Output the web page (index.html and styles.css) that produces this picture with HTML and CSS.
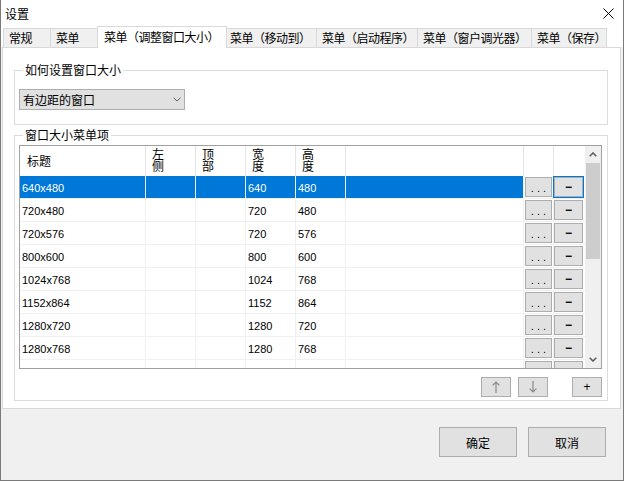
FILE: index.html
```html
<!DOCTYPE html>
<html lang="zh">
<head>
<meta charset="utf-8">
<title>设置</title>
<link rel="stylesheet" href="styles.css">
</head>
<body>
<div class="window">
  <div class="titlebar">
    <span class="title">设置</span>
    <svg class="close" width="11" height="11" viewBox="0 0 11 11"><path d="M0.5 0.5 L10.5 10.5 M10.5 0.5 L0.5 10.5" stroke="#000" stroke-width="1" fill="none"/></svg>
  </div>
  <div class="tabs">
    <div class="tab t1">常规</div>
    <div class="tab t2">菜单</div>
    <div class="tab active">菜单（调整窗口大小）</div>
    <div class="tab t4">菜单（移动到）</div>
    <div class="tab t5">菜单（启动程序）</div>
    <div class="tab t6">菜单（窗户调光器）</div>
    <div class="tab t7">菜单（保存）</div>
  </div>
  <div class="panel">
    <div class="group g1">
      <div class="legend">如何设置窗口大小</div>
      <div class="combo">
        <span>有边距的窗口</span>
        <svg width="8" height="5" viewBox="0 0 8 5"><polyline points="0.5,0.8 4,4 7.5,0.8" stroke="#606060" stroke-width="1" fill="none"/></svg>
      </div>
    </div>
    <div class="group g2">
      <div class="legend">窗口大小菜单项</div>
      <div class="list">
        <div class="rows">
          <div class="hdr">
            <div class="hc hc1">标题</div>
            <div class="hc"><span class="vt">左侧</span></div>
            <div class="hc"><span class="vt">顶部</span></div>
            <div class="hc"><span class="vt">宽度</span></div>
            <div class="hc"><span class="vt">高度</span></div>
            <div class="hc"></div>
            <div class="hc"></div>
            <div class="hc last"></div>
          </div>
          <div class="r sel">
            <div class="c t">640x480</div><div class="c t"></div><div class="c t"></div><div class="c t">640</div><div class="c t">480</div><div class="c t"></div>
            <div class="c cb"><button class="dots">. . .</button></div>
            <div class="c cb last"><button class="minus focus">−</button></div>
          </div>
          <div class="r">
            <div class="c">720x480</div><div class="c"></div><div class="c"></div><div class="c">720</div><div class="c">480</div><div class="c"></div>
            <div class="c cb"><button class="dots">. . .</button></div>
            <div class="c cb last"><button class="minus">−</button></div>
          </div>
          <div class="r">
            <div class="c">720x576</div><div class="c"></div><div class="c"></div><div class="c">720</div><div class="c">576</div><div class="c"></div>
            <div class="c cb"><button class="dots">. . .</button></div>
            <div class="c cb last"><button class="minus">−</button></div>
          </div>
          <div class="r">
            <div class="c">800x600</div><div class="c"></div><div class="c"></div><div class="c">800</div><div class="c">600</div><div class="c"></div>
            <div class="c cb"><button class="dots">. . .</button></div>
            <div class="c cb last"><button class="minus">−</button></div>
          </div>
          <div class="r">
            <div class="c">1024x768</div><div class="c"></div><div class="c"></div><div class="c">1024</div><div class="c">768</div><div class="c"></div>
            <div class="c cb"><button class="dots">. . .</button></div>
            <div class="c cb last"><button class="minus">−</button></div>
          </div>
          <div class="r">
            <div class="c">1152x864</div><div class="c"></div><div class="c"></div><div class="c">1152</div><div class="c">864</div><div class="c"></div>
            <div class="c cb"><button class="dots">. . .</button></div>
            <div class="c cb last"><button class="minus">−</button></div>
          </div>
          <div class="r">
            <div class="c">1280x720</div><div class="c"></div><div class="c"></div><div class="c">1280</div><div class="c">720</div><div class="c"></div>
            <div class="c cb"><button class="dots">. . .</button></div>
            <div class="c cb last"><button class="minus">−</button></div>
          </div>
          <div class="r">
            <div class="c">1280x768</div><div class="c"></div><div class="c"></div><div class="c">1280</div><div class="c">768</div><div class="c"></div>
            <div class="c cb"><button class="dots">. . .</button></div>
            <div class="c cb last"><button class="minus">−</button></div>
          </div>
          <div class="r">
            <div class="c"></div><div class="c"></div><div class="c"></div><div class="c"></div><div class="c"></div><div class="c"></div>
            <div class="c cb"><button class="dots"></button></div>
            <div class="c cb last"><button class="minus"></button></div>
          </div>
        </div>
        <div class="sb">
          <div class="sb-btn">
            <svg width="8" height="5" viewBox="0 0 8 5"><polyline points="0.7,4.3 4,1 7.3,4.3" stroke="#606060" stroke-width="1.6" fill="none"/></svg>
          </div>
          <div class="thumb"></div>
          <div class="sb-space"></div>
          <div class="sb-btn">
            <svg width="8" height="5" viewBox="0 0 8 5"><polyline points="0.7,0.7 4,4 7.3,0.7" stroke="#606060" stroke-width="1.6" fill="none"/></svg>
          </div>
        </div>
      </div>
      <div class="tools">
        <button class="tbtn">
          <svg width="8" height="12" viewBox="0 0 8 12"><path d="M4 1 V12 M0.6 4.4 L4 1 L7.4 4.4" stroke="#8a8a8a" stroke-width="1.2" fill="none"/></svg>
        </button>
        <button class="tbtn">
          <svg width="8" height="12" viewBox="0 0 8 12"><path d="M4 0 V11 M0.6 7.6 L4 11 L7.4 7.6" stroke="#8a8a8a" stroke-width="1.2" fill="none"/></svg>
        </button>
        <button class="tbtn plus">+</button>
      </div>
    </div>
  </div>
  <div class="footer">
    <button class="btn">确定</button>
    <button class="btn">取消</button>
  </div>
</div>
</body>
</html>
```

FILE: styles.css
```css
* { box-sizing: border-box; }

body {
  margin: 0;
  font-family: "Noto Sans CJK SC", "Liberation Sans", sans-serif;
  font-size: 12px;
  color: #000;
  background: #f0f0f0;
}

.window {
  width: 624px;
  height: 481px;
  border: 1px solid #7a7a7a;
  border-top: none;
  background: #f0f0f0;
  display: flex;
  flex-direction: column;
}

.titlebar {
  height: 26px;
  flex: none;
  background: #fff;
  display: flex;
  align-items: center;
  justify-content: space-between;
  padding: 1px 9px 0 4px;
}

.title { line-height: 16px; }

.close { display: block; }

.tabs {
  height: 21px;
  flex: none;
  background: #fff;
  display: flex;
  align-items: flex-end;
  padding-left: 2px;
}

.tab {
  flex: none;
  height: 19px;
  line-height: 17px;
  border: 1px solid #d9d9d9;
  border-bottom: none;
  background: #f0f0f0;
  padding-left: 5px;
  margin-left: -1px;
  white-space: nowrap;
  overflow: hidden;
  letter-spacing: -0.5px;
}

.t1 { width: 48px; margin-left: 0; }
.t2 { width: 50px; }
.t4 { width: 93px; }
.t5 { width: 102px; }
.t6 { width: 115px; }
.t7 { width: 76px; }

.tab.active {
  width: 130px;
  height: 22px;
  line-height: 19px;
  background: #fff;
  margin: 0 -2px -1px -3px;
  padding-left: 6px;
  position: relative;
  z-index: 1;
}

.panel {
  flex: none;
  height: 362px;
  margin: 0 2px 0 1px;
  border: 1px solid #d9d9d9;
  background: #fff;
  padding: 22px 12px 0 11px;
}

.group {
  border: 1px solid #dcdcdc;
}

.legend {
  width: max-content;
  margin: -8px 0 0 4px;
  padding: 0 2px;
  background: #fff;
  line-height: 14px;
}

.g1 { padding: 0 0 14px 4px; }

.combo {
  width: 166px;
  height: 21px;
  margin-top: 12px;
  background: #e1e1e1;
  border: 1px solid #adadad;
  display: flex;
  align-items: center;
  justify-content: space-between;
  padding: 0 3px 0 3px;
  line-height: 16px;
}

.combo svg { display: block; }

.g2 {
  margin-top: 10px;
  padding: 0 5px 3px 4px;
}

.list {
  margin-top: 3px;
  height: 224px;
  border: 1px solid #a0a0a0;
  display: flex;
}

.rows {
  width: 565px;
  flex: none;
  overflow: hidden;
}

.hdr, .r {
  display: grid;
  grid-template-columns: 126px 50px 50px 50px 50px 178px 30px 31px;
}

.hdr { height: 30px; }

.hc {
  border-right: 1px solid #e5e5e5;
  padding: 2px 0 0 6px;
  line-height: 12px;
}

.hc1 {
  padding: 0 0 0 7px;
  line-height: 30px;
}

.vt {
  display: block;
  width: 13px;
}

.last { border-right: none; }

.r {
  height: 23px;
  border-bottom: 1px solid #f0f0f0;
}

.c {
  border-right: 1px solid #f0f0f0;
  font-family: "Liberation Sans", sans-serif;
  font-size: 11px;
  line-height: 22px;
  padding: 1px 0 0 2px;
  white-space: nowrap;
  overflow: hidden;
}

.c.last { border-right: none; }

.r.sel .c.t {
  background: #0078d7;
  color: #fff;
}

.c.cb {
  padding: 0;
  display: flex;
  align-items: center;
  overflow: visible;
}

.dots, .minus, .tbtn {
  background: #e1e1e1;
  border: 1px solid #adadad;
  padding: 0;
  margin: 0;
  font-family: "Liberation Sans", sans-serif;
  color: #000;
  display: flex;
  align-items: center;
  justify-content: center;
}

.dots {
  width: 27px;
  height: 20px;
  margin-left: 1px;
  font-size: 11px;
  line-height: 12px;
  padding-top: 2px;
}

.minus {
  width: 29px;
  height: 20px;
  font-size: 12px;
  font-weight: bold;
}

.minus.focus {
  box-shadow: 0 0 0 1px #0078d7;
}

.sb {
  width: 16px;
  flex: none;
  background: #f0f0f0;
  display: flex;
  flex-direction: column;
}

.sb-btn {
  height: 17px;
  flex: none;
  display: flex;
  align-items: center;
  justify-content: center;
}

.sb-btn svg { display: block; }

.thumb {
  height: 96px;
  flex: none;
  margin: 0 1px;
  background: #cdcdcd;
}

.sb-space { flex: 1; }

.tools {
  display: flex;
  justify-content: flex-end;
  gap: 7px;
  margin-top: 8px;
}

.tbtn {
  width: 30px;
  height: 20px;
}

.tbtn svg { display: block; }

.tbtn.plus {
  margin-left: 17px;
  font-size: 12px;
}

.footer {
  flex: 1;
  display: flex;
  justify-content: flex-end;
  align-items: flex-start;
  gap: 11px;
  padding: 18px 17px 0 0;
}

.btn {
  width: 78px;
  height: 30px;
  margin: 0;
  padding: 0;
  background: #e1e1e1;
  border: 1px solid #adadad;
  font-family: "Noto Sans CJK SC", sans-serif;
  font-size: 12px;
  color: #000;
}
```
